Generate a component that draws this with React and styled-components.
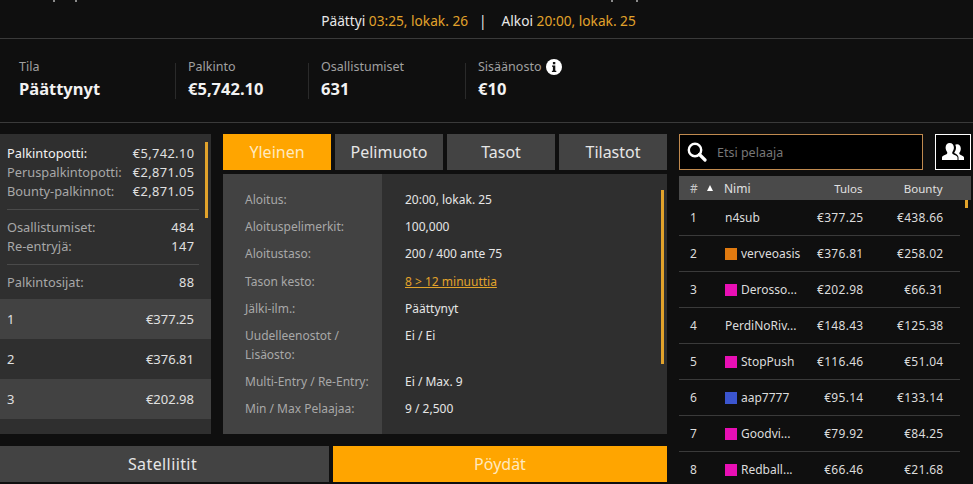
import React from "react";
import styled, { createGlobalStyle } from "styled-components";

const GlobalStyle = createGlobalStyle`
  html, body {
    margin: 0;
    padding: 0;
    height: 100%;
    background: #0f0f0f;
    overflow: hidden;
  }
  body {
    font-family: "Noto Sans", "Open Sans", sans-serif;
    color: #e6e6e6;
  }
  * {
    box-sizing: border-box;
  }
`;

const infoRows = [
  { label: ["Aloitus:"], value: "20:00, lokak. 25" },
  { label: ["Aloituspelimerkit:"], value: "100,000" },
  { label: ["Aloitustaso:"], value: "200 / 400 ante 75" },
  { label: ["Tason kesto:"], value: "8 > 12 minuuttia", link: true },
  { label: ["Jälki-ilm.:"], value: "Päättynyt" },
  { label: ["Uudelleenostot /", "Lisäosto:"], value: "Ei / Ei" },
  { label: ["Multi-Entry / Re-Entry:"], value: "Ei / Max. 9" },
  { label: ["Min / Max Pelaajaa:"], value: "9 / 2,500" },
];

const players = [
  { pos: 1, name: "n4sub", result: "€377.25", bounty: "€438.66" },
  { pos: 2, name: "verveoasis", color: "#e07a10", result: "€376.81", bounty: "€258.02" },
  { pos: 3, name: "Derosso...", color: "#e80fb4", result: "€202.98", bounty: "€66.31" },
  { pos: 4, name: "PerdiNoRiv...", result: "€148.43", bounty: "€125.38" },
  { pos: 5, name: "StopPush", color: "#e80fb4", result: "€116.46", bounty: "€51.04" },
  { pos: 6, name: "aap7777", color: "#3b55cf", result: "€95.14", bounty: "€133.14" },
  { pos: 7, name: "Goodvi...", color: "#e80fb4", result: "€79.92", bounty: "€84.25" },
  { pos: 8, name: "Redball...", color: "#e80fb4", result: "€66.46", bounty: "€21.68" },
];

const App = () => {
  return (
    <Page>
      <GlobalStyle />
      <TimeBar>
        <EdgeMark $left={53} />
        <EdgeMark $left={75} />
        <EdgeMark $left={611} />
        <EdgeMark $left={636} />
        <span>Päättyi</span> <Gold>03:25, lokak. 26</Gold>
        <Sep>|</Sep>
        <span>Alkoi</span> <Gold>20:00, lokak. 25</Gold>
      </TimeBar>
      <Stats>
        <Stat $width={156}>
          <StatLabel>Tila</StatLabel>
          <StatValue>Päättynyt</StatValue>
        </Stat>
        <Stat $width={133} $divided>
          <StatLabel>Palkinto</StatLabel>
          <StatValue>€5,742.10</StatValue>
        </Stat>
        <Stat $width={157} $divided>
          <StatLabel>Osallistumiset</StatLabel>
          <StatValue>631</StatValue>
        </Stat>
        <Stat $width={130} $divided>
          <StatLabel>
            Sisäänosto
            <InfoIcon viewBox="0 0 16 16">
              <circle cx="8" cy="8" r="8" fill="#fff" />
              <rect x="6.9" y="3" width="2.4" height="2.3" fill="#111" />
              <path d="M6 6.400h3.300v5.400h1v1.300H5.900v-1.300h1V7.700H6z" fill="#111" />
            </InfoIcon>
          </StatLabel>
          <StatValue>€10</StatValue>
        </Stat>
      </Stats>

      <Content>
        <LeftBlock>
          <Panels>
            <Summary>
              <ScrollThumb $top={8} $height={76} $right={3} />
              <SummaryGroup>
                <SummaryRow $bright>
                  <span>Palkintopotti:</span>
                  <Money>€5,742.10</Money>
                </SummaryRow>
                <SummaryRow>
                  <span>Peruspalkintopotti:</span>
                  <Money>€2,871.05</Money>
                </SummaryRow>
                <SummaryRow>
                  <span>Bounty-palkinnot:</span>
                  <Money>€2,871.05</Money>
                </SummaryRow>
              </SummaryGroup>
              <SummaryGroup>
                <SummaryRow>
                  <span>Osallistumiset:</span>
                  <Money>484</Money>
                </SummaryRow>
                <SummaryRow>
                  <span>Re-entryjä:</span>
                  <Money>147</Money>
                </SummaryRow>
              </SummaryGroup>
              <SummaryGroup $last>
                <SummaryRow>
                  <span>Palkintosijat:</span>
                  <Money>88</Money>
                </SummaryRow>
              </SummaryGroup>
              <PrizeRow $light>
                <span>1</span>
                <span>€377.25</span>
              </PrizeRow>
              <PrizeRow>
                <span>2</span>
                <span>€376.81</span>
              </PrizeRow>
              <PrizeRow $light>
                <span>3</span>
                <span>€202.98</span>
              </PrizeRow>
            </Summary>

            <CenterColumn>
              <Tabs>
                <Tab $active>Yleinen</Tab>
                <Tab>Pelimuoto</Tab>
                <Tab>Tasot</Tab>
                <Tab>Tilastot</Tab>
              </Tabs>
              <InfoPanel>
                <ScrollThumb $top={16} $height={174} $right={3} />
                {infoRows.map((row) => (
                  <InfoRow key={row.value}>
                    <InfoLabel>
                      {row.label.map((line) => (
                        <div key={line}>{line}</div>
                      ))}
                    </InfoLabel>
                    <InfoValue $link={row.link}>{row.value}</InfoValue>
                  </InfoRow>
                ))}
              </InfoPanel>
            </CenterColumn>
          </Panels>

          <Footer>
            <FooterButton $width={329}>Satelliitit</FooterButton>
            <FooterButton $width={334} $active>
              Pöydät
            </FooterButton>
          </Footer>
        </LeftBlock>

        <RightColumn>
          <SearchRow>
            <SearchBox>
              <svg width="20" height="20" viewBox="0 0 20 20">
                <circle cx="8" cy="8" r="6.2" fill="none" stroke="#fff" strokeWidth="2.4" />
                <path d="M12.500 12.500L18 18" stroke="#fff" strokeWidth="3.200" strokeLinecap="round" />
              </svg>
              <span>Etsi pelaaja</span>
            </SearchBox>
            <FriendsButton>
              <svg width="22" height="18" viewBox="0 0 22 18">
                <path
                  d="M0 17v-2.600c0-1.500 4-2.600 5-3.600.5-.6.3-1.500-.2-2.200C4 7.500 3.600 6 3.600 4.600 3.600 2 5.200 0 7.700 0s4.200 2 4.200 4.600c0 1.400-.4 2.900-1.200 4-.5.700-.7 1.600-.2 2.200 1 1 5 2.100 5 3.600V17z"
                  fill="#fff"
                />
                <path
                  d="M16.500 17H22v-2.600c0-1.400-3.500-2.300-4.400-3.200-.5-.6-.3-1.400.1-2 .8-1.100 1.100-2.500 1.100-3.800C18.800 3 17.300 1.200 15 1.200c-.7 0-1.300.2-1.800.5.500.8.800 1.800.800 2.900 0 1.600-.5 3.300-1.400 4.500-.2.300-.3.600-.3.800 1.800 1.100 4.200 2.300 4.200 4.500z"
                  fill="#fff"
                />
              </svg>
            </FriendsButton>
          </SearchRow>
          <PlayerHead>
            <HashCell>#</HashCell>
            <SortArrow />
            <NameHead>Nimi</NameHead>
            <MoneyHead $width={62}>Tulos</MoneyHead>
            <MoneyHead $width={80}>Bounty</MoneyHead>
          </PlayerHead>
          <PlayerList>
            <ScrollThumb $top={0} $height={8} $right={3} />
            {players.map((p) => (
              <PlayerRow key={p.pos}>
                <PosCell>{p.pos}</PosCell>
                <NameCell>
                  {p.color && <Swatch $color={p.color} />}
                  {p.name}
                </NameCell>
                <MoneyCell $width={62}>{p.result}</MoneyCell>
                <MoneyCell $width={80}>{p.bounty}</MoneyCell>
              </PlayerRow>
            ))}
          </PlayerList>
        </RightColumn>
      </Content>
    </Page>
  );
};

const Page = styled.div`
  width: 973px;
  height: 484px;
  overflow: hidden;
  background: #0f0f0f;
`;

const TimeBar = styled.div`
  position: relative;
  height: 39px;
  padding: 11px 16px 0 0;
  text-align: center;
  font-size: 13.7px;
  line-height: 19px;
  color: #e8e8e8;
  border-bottom: 1px solid #3a3a3a;
`;

const EdgeMark = styled.i`
  position: absolute;
  top: 0;
  left: ${(p) => p.$left}px;
  width: 2px;
  height: 2px;
  background: #8a8a8a;
`;

const Gold = styled.span`
  color: #e2a32b;
`;

const Sep = styled.span`
  margin: 0 15px 0 11px;
`;

const Stats = styled.div`
  height: 84px;
  display: flex;
  align-items: center;
  padding-left: 19px;
  border-bottom: 1px solid #3a3a3a;
`;

const Stat = styled.div`
  width: ${(p) => p.$width}px;
  height: 36px;
  ${(p) => p.$divided && "border-left: 1px solid #2a2a2a; padding-left: 12px;"}
`;

const StatLabel = styled.div`
  display: flex;
  align-items: center;
  gap: 5px;
  height: 14px;
  margin-top: -3px;
  font-size: 12.5px;
  line-height: 14px;
  color: #a0a0a0;
`;

const StatValue = styled.div`
  margin-top: 5px;
  font-size: 16.5px;
  line-height: 20px;
  font-weight: 700;
  color: #f2f2f2;
`;

const InfoIcon = styled.svg`
  width: 16px;
  height: 16px;
`;

const Content = styled.div`
  display: flex;
  gap: 12px;
  margin-top: 11px;
`;

const LeftBlock = styled.div`
  width: 667px;
`;

const Panels = styled.div`
  display: flex;
  gap: 12px;
  height: 300px;
`;

const Summary = styled.div`
  position: relative;
  width: 211px;
  height: 300px;
  padding-top: 2px;
  background: #2f2f2f;
  overflow: hidden;
`;

const ScrollThumb = styled.div`
  position: absolute;
  top: ${(p) => p.$top}px;
  right: ${(p) => p.$right}px;
  width: 3px;
  height: ${(p) => p.$height}px;
  background: #e2a32b;
`;

const SummaryGroup = styled.div`
  margin: 0 12px 0 7px;
  padding: ${(p) => (p.$last ? "8px 0 7px" : "8px 0 8px")};
  border-bottom: ${(p) => (p.$last ? "none" : "1px solid #4a4a4a")};
`;

const SummaryRow = styled.div`
  display: flex;
  justify-content: space-between;
  padding-right: 5px;
  font-size: 12.8px;
  line-height: 19px;
  color: ${(p) => (p.$bright ? "#f2f2f2" : "#a8a8a8")};
`;

const Money = styled.span`
  letter-spacing: 0.4px;
  margin-right: -0.4px;
  color: #e0e0e0;
`;

const PrizeRow = styled.div`
  display: flex;
  justify-content: space-between;
  align-items: center;
  height: 40px;
  padding: 0 17px 0 7px;
  font-size: 13px;
  color: #e0e0e0;
  background: ${(p) => (p.$light ? "#424242" : "#2f2f2f")};
`;

const CenterColumn = styled.div`
  width: 444px;
`;

const Tabs = styled.div`
  display: flex;
  gap: 4px;
  height: 36px;
`;

const Tab = styled.div`
  flex: 1;
  display: flex;
  align-items: center;
  justify-content: center;
  font-size: 16px;
  color: ${(p) => (p.$active ? "#ffe9bf" : "#e6e6e6")};
  background: ${(p) => (p.$active ? "#ffa500" : "#434343")};
`;

const InfoPanel = styled.div`
  position: relative;
  height: 260px;
  margin-top: 4px;
  padding-top: 16px;
  background: linear-gradient(to right, #424242 159px, #2f2f2f 159px);
`;

const InfoRow = styled.div`
  display: flex;
  padding-bottom: 8.2px;
  font-size: 12px;
  line-height: 19px;
`;

const InfoLabel = styled.div`
  width: 182px;
  padding-left: 22px;
  color: #a8a8a8;
`;

const InfoValue = styled.div`
  color: ${(p) => (p.$link ? "#e2a32b" : "#e6e6e6")};
  text-decoration: ${(p) => (p.$link ? "underline" : "none")};
`;

const Footer = styled.div`
  display: flex;
  gap: 4px;
  margin-top: 12px;
`;

const FooterButton = styled.div`
  width: ${(p) => p.$width}px;
  height: 36px;
  display: flex;
  align-items: center;
  justify-content: center;
  font-size: 16px;
  color: ${(p) => (p.$active ? "#ffe9bf" : "#e6e6e6")};
  background: ${(p) => (p.$active ? "#ffa500" : "#434343")};
  ${(p) => !p.$active && "letter-spacing: 0.4px; padding-right: 4px;"}
`;

const RightColumn = styled.div`
  width: 292px;
`;

const SearchRow = styled.div`
  display: flex;
  justify-content: space-between;
  height: 36px;
`;

const SearchBox = styled.div`
  width: 244px;
  display: flex;
  align-items: center;
  gap: 10px;
  padding-left: 7px;
  background: #000;
  border: 1px solid #c08a4f;
  font-size: 12.5px;
  color: #777;
`;

const FriendsButton = styled.div`
  width: 36px;
  display: flex;
  align-items: center;
  justify-content: center;
  background: #000;
  border: 1px solid #fff;
`;

const PlayerHead = styled.div`
  display: flex;
  align-items: center;
  height: 24px;
  margin-top: 6px;
  background: #4a4a4a;
  font-size: 12px;
  color: #e0e0e0;
`;

const HashCell = styled.div`
  width: 28px;
  padding-left: 11px;
  color: #c8c8c8;
`;

const SortArrow = styled.div`
  width: 0;
  height: 0;
  margin-right: 11px;
  border-left: 3.5px solid transparent;
  border-right: 3.5px solid transparent;
  border-bottom: 6px solid #fff;
`;

const NameHead = styled.div`
  width: 76.5px;
`;

const MoneyHead = styled.div`
  width: ${(p) => p.$width}px;
  text-align: right;
  font-size: 11.5px;
`;

const PlayerList = styled.div`
  position: relative;
  height: 290px;
`;

const PlayerRow = styled.div`
  display: flex;
  align-items: center;
  width: 281px;
  height: 36px;
  border-bottom: 1px solid #3a3a3a;
  font-size: 12px;
  color: #dcdcdc;
`;

const PosCell = styled.div`
  width: 46px;
  padding-left: 11px;
`;

const NameCell = styled.div`
  display: flex;
  align-items: center;
  gap: 4px;
  width: 76.5px;
  white-space: nowrap;
`;

const Swatch = styled.span`
  width: 12px;
  height: 12px;
  flex: none;
  background: ${(p) => p.$color};
`;

const MoneyCell = styled.div`
  width: ${(p) => p.$width}px;
  text-align: right;
  letter-spacing: 0.3px;
`;

export default App;
